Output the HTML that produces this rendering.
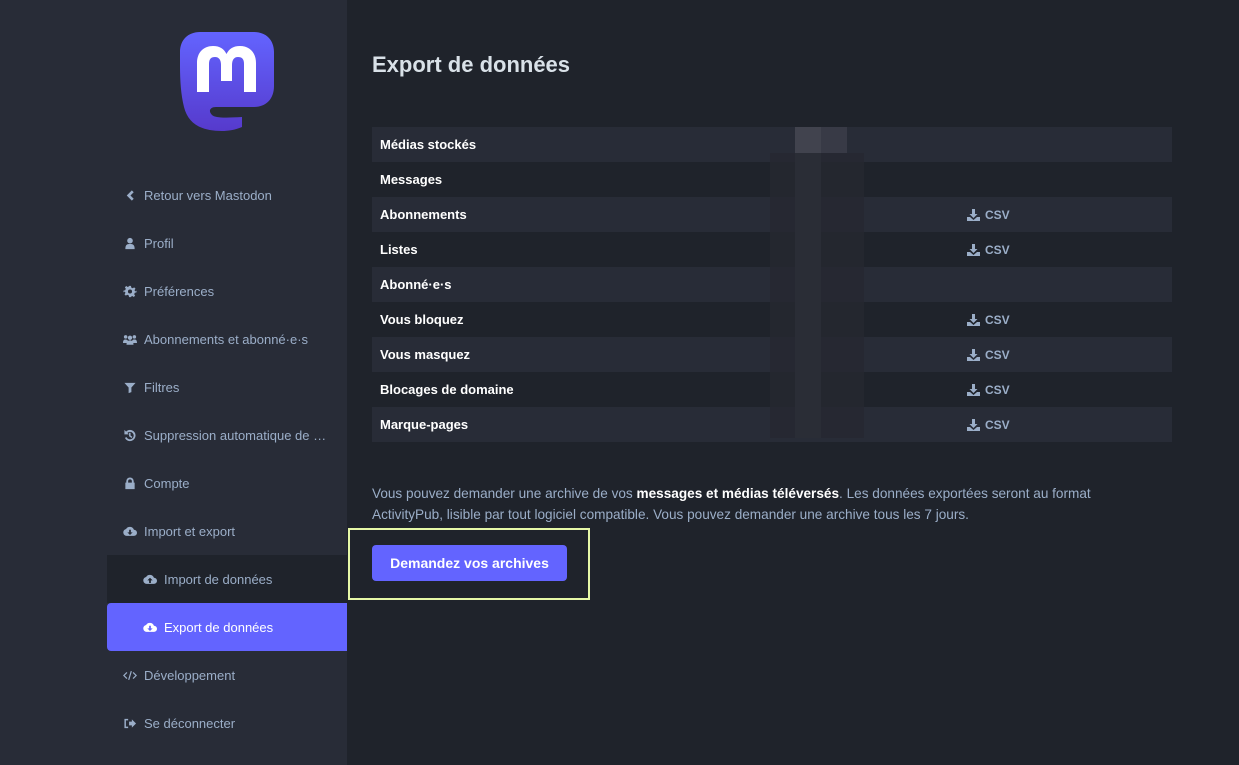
<!DOCTYPE html>
<html><head><meta charset="utf-8"><style>
*{margin:0;padding:0;box-sizing:border-box}
body{width:1239px;height:765px;overflow:hidden;background:#1f232b;font-family:"Liberation Sans",sans-serif;position:relative}
.side{position:absolute;left:0;top:0;width:347px;height:765px;background:#282c37}
.logo{position:absolute;left:180px;top:31px}
.nav a{position:absolute;left:107px;width:240px;height:48px;display:flex;align-items:center;color:#9baec8;font-size:13px;text-decoration:none}
.nav a svg{margin-left:16px;margin-right:7px;width:14px;height:13px;fill:#9baec8}
.nav a.sub svg{margin-left:36px}
.nav a.dark{background:#1f232b}
.nav a.act{background:#6364ff;color:#fff;border-radius:4px 0 0 4px}
.nav a.act svg{fill:#fff}
h1{position:absolute;left:372px;top:52px;font-size:22px;color:#d9e1e8;font-weight:bold}
.tbl{position:absolute;left:372px;top:127px;width:800px}
.tbl div{height:35px;display:flex;align-items:center;color:#fff;font-weight:bold;font-size:13px;padding-left:8px;position:relative}
.tbl div:nth-child(odd){background:#282c37}
.csv{position:absolute;left:595px;color:#9baec8;font-size:12px;display:flex;align-items:center;gap:5px}
.px{position:absolute}
p{position:absolute;left:372px;top:483px;width:790px;color:#9baec8;font-size:13.6px;line-height:21px}
p b{color:#fff}
.hl{position:absolute;left:348px;top:528px;width:242px;height:72px;border:2px solid #e6f8a7}
.btn{position:absolute;left:372px;top:545px;width:195px;height:36px;background:#6364ff;border-radius:4px;color:#fff;font-weight:bold;font-size:14px;display:flex;align-items:center;justify-content:center}
</style></head><body>
<div class="side"></div>
<svg class="logo" width="94" height="100" viewBox="0 0 94 100">
<defs><linearGradient id="g" x1="0" y1="0" x2="0" y2="1"><stop offset="0" stop-color="#6364ff"/><stop offset="1" stop-color="#563acc"/></linearGradient></defs>
<path d="M20 1 H74 C86 1 94 9 94 21 V55 C94 68 86 76 74 76 H36 C30 76 28 80 32 84 C35 87 45 87 62 86 V96 C55 99 48 100 42 100 C20 100 8 92 4 76 C1 64 0 50 0 35 V21 C0 9 8 1 20 1 Z" fill="url(#g)"/>
<path d="M17 61 V32 C17 21 24 15 33 15 C40 15 44 18 46.5 23 C49 18 53 15 60 15 C69 15 76 21 76 32 V61 H64 V33 C64 28 62 26 58 26 C54 26 52 29 52 34 V50 H41 V34 C41 29 39 26 35 26 C31 26 29 28 29 33 V61 Z" fill="#fff"/>
</svg>
<div class="nav">
<a style="top:171px"><svg viewBox="0 0 14 14"><path d="M9 1.5 L11 3.5 7.5 7 11 10.5 9 12.5 3.5 7Z"/></svg>Retour vers Mastodon</a>
<a style="top:219px"><svg viewBox="0 0 14 14"><circle cx="7" cy="4" r="3"/><path d="M2 13 C2 8 4 7.5 7 7.5 C10 7.5 12 8 12 13Z"/></svg>Profil</a>
<a style="top:267px"><svg viewBox="0 0 14 14"><path d="M6 1h2l.4 1.8 1.5.7 1.6-1 1.4 1.4-1 1.6.7 1.5L14 6v2l-1.8.4-.7 1.5 1 1.6-1.4 1.4-1.6-1-1.5.7L8 13H6l-.4-1.8-1.5-.7-1.6 1L1.1 10.1l1-1.6L1.4 7 0 8V6l1.8-.4.7-1.5-1-1.6L2.9 1.1l1.6 1 1.5-.7Z M7 4.8A2.2 2.2 0 1 0 7 9.2 2.2 2.2 0 1 0 7 4.8Z" fill-rule="evenodd"/></svg>Préférences</a>
<a style="top:315px"><svg viewBox="0 0 16 14"><circle cx="3" cy="4" r="2"/><circle cx="13" cy="4" r="2"/><circle cx="8" cy="5" r="2.5"/><path d="M0 11c0-3 1-4 3-4s3 1 3 4z M10 11c0-3 1-4 3-4s3 1 3 4z M4 13c0-4 2-5 4-5s4 1 4 5z"/></svg>Abonnements et abonné·e·s</a>
<a style="top:363px"><svg viewBox="0 0 14 14"><path d="M1 2h12L8.5 7v5L5.5 13V7Z"/></svg>Filtres</a>
<a style="top:411px"><svg viewBox="0 0 14 14"><path d="M7 1A6 6 0 1 1 1.5 9.5L3.3 8.7A4 4 0 1 0 4.2 4.2L5.8 5.8H1V1L2.8 2.8A6 6 0 0 1 7 1Z M6 4h1.6v3l2 1.5-.9 1.2L6 7.8Z"/></svg>Suppression automatique de …</a>
<a style="top:459px"><svg viewBox="0 0 14 14"><path d="M3 6V4.5a4 4 0 0 1 8 0V6h1v7H2V6Z M5 6h4V4.5a2 2 0 0 0-4 0Z" fill-rule="evenodd"/></svg>Compte</a>
<a style="top:507px"><svg viewBox="0 0 16 14"><path d="M4 12A4 4 0 0 1 3.5 4.1 5 5 0 0 1 12.5 5 3.5 3.5 0 0 1 12.5 12Z" /><path d="M7 5h2v3h2l-3 3-3-3h2Z" fill="#282c37"/></svg>Import et export</a>
<a class="sub dark" style="top:555px"><svg viewBox="0 0 16 14"><path d="M4 12A4 4 0 0 1 3.5 4.1 5 5 0 0 1 12.5 5 3.5 3.5 0 0 1 12.5 12Z"/><path d="M7 11h2V8h2L8 5 5 8h2Z" fill="#1f232b"/></svg>Import de données</a>
<a class="sub act" style="top:603px"><svg viewBox="0 0 16 14"><path d="M4 12A4 4 0 0 1 3.5 4.1 5 5 0 0 1 12.5 5 3.5 3.5 0 0 1 12.5 12Z"/><path d="M7 5h2v3h2l-3 3-3-3h2Z" fill="#6364ff"/></svg>Export de données</a>
<a style="top:651px"><svg viewBox="0 0 16 14"><path d="M4.5 3.5 1 7l3.5 3.5 M11.5 3.5 15 7l-3.5 3.5 M9.5 2 6.5 12" fill="none" stroke="#9baec8" stroke-width="1.4"/></svg>Développement</a>
<a style="top:699px"><svg viewBox="0 0 14 14"><path d="M5 2H1v10h4v-1.6H2.6V3.6H5Z M6 5h3V2.5L13.5 7 9 11.5V9H6Z"/></svg>Se déconnecter</a>
</div>
<h1>Export de données</h1>
<div class="tbl">
<div>Médias stockés</div>
<div>Messages</div>
<div>Abonnements<span class="csv"><svg width="13" height="12" viewBox="0 0 13 12"><path d="M5 0h3v5h2.5L6.5 9 2.5 5H5z M0 8h3l3.5 3L10 8h3v4H0z" fill="#9baec8"/></svg>CSV</span></div>
<div>Listes<span class="csv"><svg width="13" height="12" viewBox="0 0 13 12"><path d="M5 0h3v5h2.5L6.5 9 2.5 5H5z M0 8h3l3.5 3L10 8h3v4H0z" fill="#9baec8"/></svg>CSV</span></div>
<div>Abonné·e·s</div>
<div>Vous bloquez<span class="csv"><svg width="13" height="12" viewBox="0 0 13 12"><path d="M5 0h3v5h2.5L6.5 9 2.5 5H5z M0 8h3l3.5 3L10 8h3v4H0z" fill="#9baec8"/></svg>CSV</span></div>
<div>Vous masquez<span class="csv"><svg width="13" height="12" viewBox="0 0 13 12"><path d="M5 0h3v5h2.5L6.5 9 2.5 5H5z M0 8h3l3.5 3L10 8h3v4H0z" fill="#9baec8"/></svg>CSV</span></div>
<div>Blocages de domaine<span class="csv"><svg width="13" height="12" viewBox="0 0 13 12"><path d="M5 0h3v5h2.5L6.5 9 2.5 5H5z M0 8h3l3.5 3L10 8h3v4H0z" fill="#9baec8"/></svg>CSV</span></div>
<div>Marque-pages<span class="csv"><svg width="13" height="12" viewBox="0 0 13 12"><path d="M5 0h3v5h2.5L6.5 9 2.5 5H5z M0 8h3l3.5 3L10 8h3v4H0z" fill="#9baec8"/></svg>CSV</span></div>
</div>
<div class="px" style="left:795px;top:127px;width:26px;height:26px;background:#41434e"></div>
<div class="px" style="left:821px;top:127px;width:26px;height:26px;background:#383a46"></div>
<div class="px" style="left:770px;top:153px;width:94px;height:285px;background:#252831;opacity:.8"></div>
<div class="px" style="left:795px;top:153px;width:26px;height:285px;background:#2a2d36"></div>
<p>Vous pouvez demander une archive de vos <b>messages et médias téléversés</b>. Les données exportées seront au format ActivityPub, lisible par tout logiciel compatible. Vous pouvez demander une archive tous les 7 jours.</p>
<div class="hl"></div>
<div class="btn">Demandez vos archives</div>
</body></html>
